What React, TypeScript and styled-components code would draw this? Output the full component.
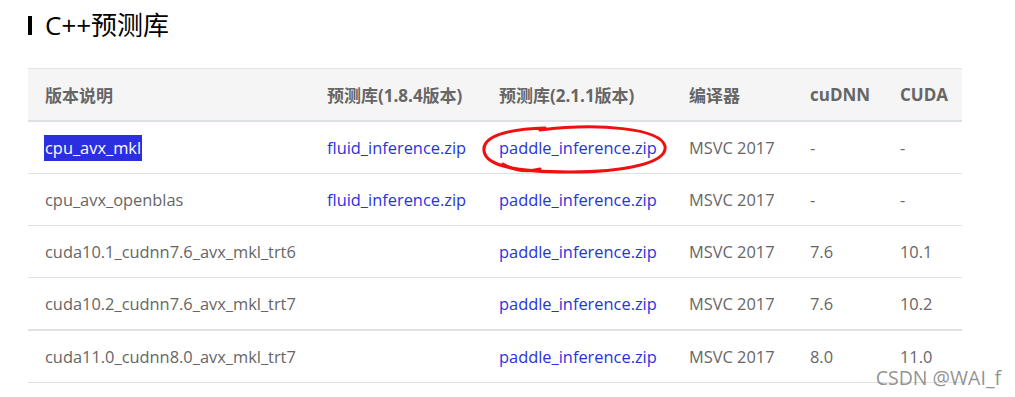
import React, { FC } from 'react';
import styled, { createGlobalStyle } from 'styled-components';

const GlobalStyle = createGlobalStyle`
  body {
    margin: 0;
    background: #fff;
    font-family: "Open Sans", "Noto Sans CJK SC", sans-serif;
  }
`;

const Page = styled.div`
  position: relative;
  width: 1015px;
  height: 397px;
  overflow: hidden;
  padding: 11px 0 0 28px;
  box-sizing: border-box;
`;

const Title = styled.h2`
  display: flex;
  align-items: center;
  gap: 13px;
  margin: 0 0 29px;
  font-size: 26px;
  font-weight: 400;
  line-height: 28px;
  color: #000;
  &::before {
    content: '';
    width: 4px;
    height: 19px;
    background: #000;
  }
`;

const Table = styled.table`
  width: 934px;
  border-collapse: collapse;
  table-layout: fixed;
  font-size: 16.4px;
  color: #666;
`;

const Head = styled.th`
  height: 51px;
  padding: 0 0 0 17px;
  text-align: left;
  font-size: 17px;
  font-weight: 700;
  color: #666;
  background: #f5f5f5;
  border-top: 1px solid #e2e4e7;
  border-bottom: 2px solid #dde0e4;
`;

const Row = styled.tr<{ $thick?: boolean }>`
  border-bottom: ${p => (p.$thick ? '2px' : '1px')} solid #dfe1e5;
`;

const Cell = styled.td`
  position: relative;
  height: 51px;
  padding: 0 0 0 17px;
  white-space: nowrap;
`;

const Link = styled.a`
  color: #2932e1;
  text-decoration: none;
`;

const Selected = styled.span`
  display: inline-block;
  margin-left: -1px;
  padding: 0 1px;
  line-height: 26px;
  background: #2b2fe0;
  color: #fff;
`;

const Circle = styled.svg`
  position: absolute;
  left: -4px;
  top: 2px;
  pointer-events: none;
`;

const Watermark = styled.div`
  position: absolute;
  right: 14px;
  bottom: 6px;
  font-size: 19.5px;
  color: rgba(110, 110, 110, 0.75);
`;

type RowData = {
  name: string;
  v184?: string;
  v211: string;
  compiler: string;
  cudnn: string;
  cuda: string;
};

const rows: RowData[] = [
  { name: 'cpu_avx_mkl', v184: 'fluid_inference.zip', v211: 'paddle_inference.zip', compiler: 'MSVC 2017', cudnn: '-', cuda: '-' },
  { name: 'cpu_avx_openblas', v184: 'fluid_inference.zip', v211: 'paddle_inference.zip', compiler: 'MSVC 2017', cudnn: '-', cuda: '-' },
  { name: 'cuda10.1_cudnn7.6_avx_mkl_trt6', v211: 'paddle_inference.zip', compiler: 'MSVC 2017', cudnn: '7.6', cuda: '10.1' },
  { name: 'cuda10.2_cudnn7.6_avx_mkl_trt7', v211: 'paddle_inference.zip', compiler: 'MSVC 2017', cudnn: '7.6', cuda: '10.2' },
  { name: 'cuda11.0_cudnn8.0_avx_mkl_trt7', v211: 'paddle_inference.zip', compiler: 'MSVC 2017', cudnn: '8.0', cuda: '11.0' },
];

const RedCircle: FC = () => (
  <Circle width="195" height="52" viewBox="0 0 195 52">
    <g fill="none" stroke="#f01010" strokeWidth="3" strokeLinecap="round">
      <path d="M62 6 C120 -1, 182 4, 187 22 C190 40, 142 48, 92 48 C42 48, 8 43, 6 27 C4 13, 27 5, 67 4" />
      <path d="M25 40 C35 46, 47 49, 62 45" />
    </g>
  </Circle>
);

const App: FC = () => {
  return (
    <>
      <GlobalStyle />
      <Page>
        <Title>C++预测库</Title>
        <Table>
          <colgroup>
            <col style={{ width: 282 }} />
            <col style={{ width: 172 }} />
            <col style={{ width: 190 }} />
            <col style={{ width: 121 }} />
            <col style={{ width: 90 }} />
            <col style={{ width: 79 }} />
          </colgroup>
          <thead>
            <tr>
              <Head>版本说明</Head>
              <Head>预测库(1.8.4版本)</Head>
              <Head>预测库(2.1.1版本)</Head>
              <Head>编译器</Head>
              <Head>cuDNN</Head>
              <Head>CUDA</Head>
            </tr>
          </thead>
          <tbody>
            {rows.map((r, i) => (
              <Row key={r.name} $thick={i === 3}>
                <Cell>{i === 0 ? <Selected>{r.name}</Selected> : r.name}</Cell>
                <Cell>{r.v184 && <Link href="#">{r.v184}</Link>}</Cell>
                <Cell>
                  <Link href="#">{r.v211}</Link>
                  {i === 0 && <RedCircle />}
                </Cell>
                <Cell>{r.compiler}</Cell>
                <Cell>{r.cudnn}</Cell>
                <Cell>{r.cuda}</Cell>
              </Row>
            ))}
          </tbody>
        </Table>
        <Watermark>CSDN @WAI_f</Watermark>
      </Page>
    </>
  );
};

export default App;
